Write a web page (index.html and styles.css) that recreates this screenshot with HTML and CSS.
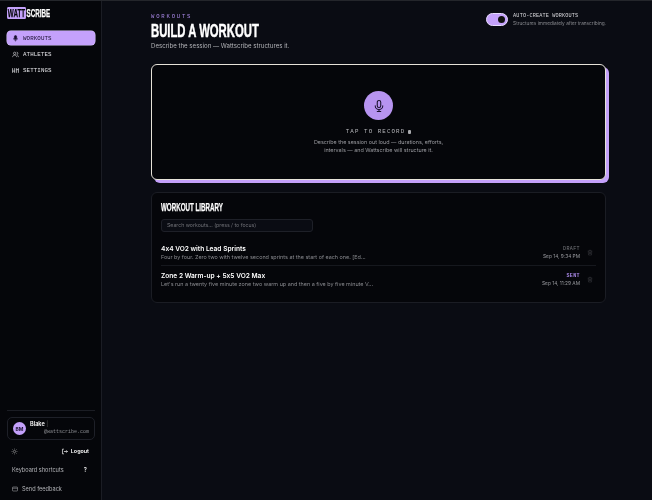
FILE: index.html
```html
<!DOCTYPE html>
<html lang="en">
<head>
    <meta charset="UTF-8">
    <title>Wattscribe</title>
    <link rel="stylesheet" href="styles.css">
</head>
<body>
    <div class="app">
        <aside class="sidebar">
            <div class="logo"><span class="logo-mark">WATT</span><span>SCRIBE</span></div>
            <nav class="nav">
                <a class="nav-item active">
                    <svg class="nav-icon" viewBox="0 0 24 24" fill="currentColor" stroke="currentColor" stroke-width="2"><rect x="8" y="2" width="8" height="13" rx="4"/><path d="M5 11a7 7 0 0 0 14 0M12 18v4" fill="none"/></svg>
                    WORKOUTS
                </a>
                <a class="nav-item">
                    <svg class="nav-icon" viewBox="0 0 24 24" fill="none" stroke="currentColor" stroke-width="2"><circle cx="9" cy="8" r="4"/><path d="M2 21c0-4 3-7 7-7s7 3 7 7M16 4a4 4 0 0 1 0 8M18 14c2 1 4 3 4 7"/></svg>
                    ATHLETES
                </a>
                <a class="nav-item">
                    <svg class="nav-icon" viewBox="0 0 24 24" fill="none" stroke="currentColor" stroke-width="2.4"><path d="M2 4v16M22 4v16M9 4v16M15 4v16M2 14h7M15 9h7"/></svg>
                    SETTINGS
                </a>
            </nav>
            <div class="sidebar-foot">
                <div class="user-card">
                    <div class="avatar">BM</div>
                    <div class="user-text">
                        <div class="user-name">Blake <span class="user-bar">|</span></div>
                        <div class="user-mail">@wattscribe.com</div>
                    </div>
                </div>
                <div class="foot-row">
                    <svg class="sun" viewBox="0 0 24 24" fill="none" stroke="currentColor" stroke-width="2"><circle cx="12" cy="12" r="4"/><path d="M12 2v3M12 19v3M2 12h3M19 12h3M5 5l2 2M17 17l2 2M5 19l2-2M17 7l2-2"/></svg>
                    <a class="logout">
                        <svg class="logout-icon" viewBox="0 0 24 24" fill="none" stroke="currentColor" stroke-width="2.4"><path d="M10 4H5v16h5M10 12h12M18 8l4 4-4 4"/></svg>
                        Logout
                    </a>
                </div>
                <div class="shortcut-row"><span>Keyboard shortcuts</span><span class="shortcut-key">?</span></div>
                <div class="feedback-row">
                    <svg class="mail-icon" viewBox="0 0 24 24" fill="none" stroke="currentColor" stroke-width="2"><rect x="2" y="4" width="20" height="16" rx="2"/><path d="M2 9h20"/></svg>
                    Send feedback
                </div>
            </div>
        </aside>

        <main class="main">
            <header class="page-head">
                <div>
                    <div class="eyebrow">WORKOUTS</div>
                    <h1>BUILD A WORKOUT</h1>
                    <p class="subtitle">Describe the session — Wattscribe structures it.</p>
                </div>
                <div class="auto-create">
                    <span class="toggle"><span class="toggle-knob"></span></span>
                    <div>
                        <div class="auto-title">AUTO-CREATE WORKOUTS</div>
                        <div class="auto-sub">Structures immediately after transcribing.</div>
                    </div>
                </div>
            </header>

            <section class="record-card">
                <div class="mic-button">
                    <svg viewBox="0 0 24 24" fill="none" stroke="currentColor" stroke-width="1.8" stroke-linecap="round"><rect x="9" y="2.5" width="6" height="12" rx="3"/><path d="M5.5 11.5a6.5 6.5 0 0 0 13 0M12 18v3.5M9 21.5h6"/></svg>
                </div>
                <div class="record-title">TAP TO RECORD <span class="record-mark"></span></div>
                <p class="record-text">Describe the session out loud — durations, efforts,<br>intervals — and Wattscribe will structure it.</p>
            </section>

            <section class="library">
                <h2>WORKOUT LIBRARY</h2>
                <div class="search">Search workouts... (press / to focus)</div>
                <div class="workout">
                    <div class="workout-info">
                        <div class="workout-name">4x4 VO2 with Lead Sprints</div>
                        <div class="workout-desc">Four by four. Zero two with twelve second sprints at the start of each one. [Ed...</div>
                    </div>
                    <div class="workout-meta">
                        <div class="status">DRAFT</div>
                        <div class="workout-date">Sep 14, 9:34 PM</div>
                    </div>
                    <svg class="trash" viewBox="0 0 24 24" fill="none" stroke="currentColor" stroke-width="2"><path d="M3 6h18M9 6V3h6v3M5 6l1 16h12l1-16M10 10v8M14 10v8"/></svg>
                </div>
                <div class="workout last">
                    <div class="workout-info">
                        <div class="workout-name">Zone 2 Warm-up + 5x5 VO2 Max</div>
                        <div class="workout-desc">Let's run a twenty five minute zone two warm up and then a five by five minute V...</div>
                    </div>
                    <div class="workout-meta">
                        <div class="status sent">SENT</div>
                        <div class="workout-date">Sep 14, 11:29 AM</div>
                    </div>
                    <svg class="trash" viewBox="0 0 24 24" fill="none" stroke="currentColor" stroke-width="2"><path d="M3 6h18M9 6V3h6v3M5 6l1 16h12l1-16M10 10v8M14 10v8"/></svg>
                </div>
            </section>
        </main>
    </div>
</body>
</html>
```

FILE: styles.css
```css
/* page */
* {
    box-sizing: border-box;
}

html, body {
    margin: 0;
    padding: 0;
    height: 100%;
    overflow: hidden;
}

body {
    background: #0a0c13;
    color: #fff;
    font-family: "Inter", "Liberation Sans", sans-serif;
    font-feature-settings: "calt" 0;
}

.app {
    display: flex;
    height: 500px;
    border-top: 1px solid #24262b;
    will-change: transform; /* grey text edges */
}

/* sidebar */
.sidebar {
    width: 102px;
    flex-shrink: 0;
    background: #05060a;
    border-right: 1px solid #1b1d24;
    padding: 0 6px 0 7px;
    display: flex;
    flex-direction: column;
}

/* condensed headline face isn't installed, so Liberation Sans is squeezed */
.logo {
    display: flex;
    align-items: center;
    margin-top: 6px;
    height: 11px;
    font-family: "Liberation Sans", sans-serif;
    font-weight: 700;
    font-size: 11.5px;
    -webkit-text-stroke: 0.25px currentColor;
    transform: scaleX(0.545);
    transform-origin: left center;
}

.logo-mark {
    background: #c4a1fb;
    color: #05060a;
    border-radius: 2px;
    padding: 0 1.5px;
    margin-right: 1px;
}

.nav {
    margin-top: 13px;
    display: flex;
    flex-direction: column;
    gap: 2px;
}

.nav-item {
    display: flex;
    align-items: center;
    gap: 4px;
    height: 14px;
    padding: 0 5px;
    font-family: "Liberation Mono", monospace;
    font-size: 5.8px;
    color: #e4e4e8;
    letter-spacing: 0.1px;
}

.nav-item.active {
    background: #c4a1fb;
    color: #1a1030;
    border-radius: 4px;
    box-shadow: 0 0 0 0.5px #dcc9fd;
}

.nav-icon {
    width: 7px;
    height: 7px;
    flex-shrink: 0;
}

.sidebar-foot {
    margin-top: auto;
    border-top: 1px solid #1b1d24;
    padding-top: 6px;
}

.user-card {
    display: flex;
    align-items: center;
    gap: 4px;
    height: 23px;
    padding: 0 5px;
    border: 1px solid #1e2028;
    border-radius: 5px;
}

.avatar {
    width: 13px;
    height: 13px;
    border-radius: 50%;
    background: #c4a1fb;
    color: #1a1030;
    font-size: 5px;
    font-weight: 700;
    display: flex;
    align-items: center;
    justify-content: center;
    flex-shrink: 0;
}

.user-text {
    flex: 1;
}

.user-name {
    font-size: 5.6px;
    font-weight: 600;
    line-height: 7px;
}

.user-bar {
    color: #555;
    font-weight: 400;
}

.user-mail {
    font-family: "Liberation Mono", monospace;
    font-size: 5px;
    color: #8a8b90;
    text-align: right;
    line-height: 8px;
}

.foot-row {
    display: flex;
    justify-content: space-between;
    align-items: center;
    height: 10px;
    margin-top: 6px;
    padding: 0 6px 0 4px;
}

.sun {
    width: 7px;
    height: 7px;
    color: #aaa;
}

.logout {
    display: flex;
    align-items: center;
    gap: 3px;
    font-size: 5.4px;
    font-weight: 600;
}

.logout-icon {
    width: 7px;
    height: 7px;
}

.shortcut-row {
    display: flex;
    justify-content: space-between;
    height: 10px;
    align-items: center;
    margin-top: 9px;
    padding: 0 8px 0 5px;
    font-size: 5.6px;
    color: #b4b5b9;
}

.shortcut-key {
    font-weight: 700;
    color: #ddd;
}

.feedback-row {
    display: flex;
    align-items: center;
    gap: 4px;
    height: 10px;
    margin-top: 9px;
    margin-bottom: 6px;
    padding: 0 5px;
    font-size: 5.6px;
    color: #b4b5b9;
}

.mail-icon {
    width: 6px;
    height: 6px;
}

/* main */
.main {
    flex: 1;
    padding: 0 46px 0 49px;
}

.page-head {
    display: flex;
    justify-content: space-between;
    align-items: flex-start;
    height: 63px;
}

.eyebrow {
    margin-top: 12px;
    font-family: "Liberation Mono", monospace;
    font-size: 5.6px;
    letter-spacing: 1.8px;
    color: #a887e6;
    line-height: 7px;
}

h1 {
    margin: 1px 0 0;
    font-family: "Liberation Sans", sans-serif;
    font-size: 19px;
    font-weight: 700;
    line-height: 20px;
    white-space: nowrap;
    -webkit-text-stroke: 0.5px #fff;
    transform: scaleX(0.595);
    transform-origin: left center;
}

.subtitle {
    margin: 1px 0 0;
    font-size: 6.1px;
    line-height: 8px;
    color: #b4b5b9;
}

.auto-create {
    display: flex;
    align-items: center;
    gap: 5px;
    margin-top: 12px;
}

.toggle {
    width: 22px;
    height: 13px;
    background: #c4a1fb;
    border: 1px solid #e8dcff;
    border-radius: 7px;
    position: relative;
    display: block;
}

.toggle-knob {
    position: absolute;
    right: 2px;
    top: 2px;
    width: 7px;
    height: 7px;
    border-radius: 50%;
    background: #111;
}

.auto-title {
    font-family: "Liberation Mono", monospace;
    font-size: 5.2px;
    letter-spacing: 0.15px;
    color: #d8d8dc;
    line-height: 7px;
}

.auto-sub {
    font-size: 4.75px;
    color: #8a8b90;
    line-height: 6px;
}

/* record */
.record-card {
    height: 116px;
    background: #05060a;
    border: 1px solid #e6e2d8;
    border-radius: 6px;
    box-shadow: 3px 3px 0 #c4a1fb;
    display: flex;
    flex-direction: column;
    align-items: center;
    padding-top: 26px;
}

.mic-button {
    width: 29px;
    height: 29px;
    border-radius: 50%;
    background: #b794f0;
    color: #17102a;
    display: flex;
    align-items: center;
    justify-content: center;
}

.mic-button svg {
    width: 14px;
    height: 14px;
}

.record-title {
    margin-top: 8px;
    font-family: "Liberation Mono", monospace;
    font-size: 5.8px;
    letter-spacing: 1.1px;
    color: #b4b5b9;
    line-height: 8px;
    display: flex;
    align-items: center;
    gap: 3px;
}

.record-mark {
    width: 3px;
    height: 4px;
    background: #a9aaae;
    border-radius: 1px;
}

.record-text {
    margin: 2px 0 0;
    text-align: center;
    font-size: 5.4px;
    line-height: 8px;
    color: #9a9ba0;
}

/* library */
.library {
    margin-top: 12px;
    height: 111px;
    background: #05060a;
    border: 1px solid #1b1d24;
    border-radius: 6px;
    padding: 10px 9px;
}

h2 {
    margin: 0;
    font-family: "Liberation Sans", sans-serif;
    font-size: 10px;
    font-weight: 700;
    line-height: 10px;
    white-space: nowrap;
    -webkit-text-stroke: 0.25px #fff;
    transform: scaleX(0.62);
    transform-origin: left center;
}

.search {
    width: 152px;
    height: 13px;
    margin-top: 6px;
    padding-left: 5px;
    border: 1px solid #1e2028;
    border-radius: 3px;
    background: #0a0c13;
    font-size: 5.2px;
    line-height: 11px;
    color: #6f7076;
}

.workout {
    display: flex;
    align-items: center;
    height: 27px;
    border-bottom: 1px solid #16181e;
}

.search + .workout {
    margin-top: 7px;
    padding-top: 1px;
}

.workout.last {
    border-bottom: none;
}

.workout-info {
    flex: 1;
}

.workout-name {
    font-size: 6.6px;
    font-weight: 600;
    line-height: 9px;
}

.workout-desc {
    font-size: 5.45px;
    line-height: 7px;
    color: #8a8b90;
}

.workout-meta {
    text-align: right;
}

.status {
    font-family: "Liberation Mono", monospace;
    font-size: 5px;
    letter-spacing: 0.4px;
    color: #77787d;
    line-height: 7px;
}

.status.sent {
    color: #a887e6;
    font-weight: 700;
}

.workout-date {
    font-size: 4.8px;
    line-height: 7px;
    color: #9a9ba0;
}

.trash {
    width: 6px;
    height: 7px;
    margin: 0 3px 0 7px;
    color: #3c3d42;
}
```
